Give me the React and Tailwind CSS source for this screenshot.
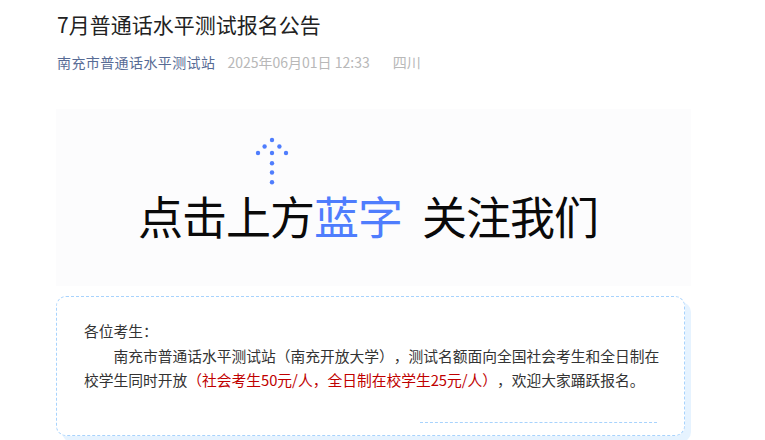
import React from 'react';

const cjk = { fontFamily: '"Noto Sans CJK SC", "Noto Sans", sans-serif' };

// dotted "up" arrow above the banner text
const DotArrow = () => {
  const dots = [
    [18, 3], [10.6, 9.5], [25.4, 9.5], [4, 16], [18, 16], [32, 16],
    [18, 26.3], [18, 35.5], [18, 45.3],
  ];
  return (
    <svg width="36" height="49" viewBox="0 0 36 49" className="block">
      {dots.map(([x, y], i) => (
        <circle key={i} cx={x} cy={y} r="2.2" fill="#4f7dfd" />
      ))}
    </svg>
  );
};

export default function App() {
  return (
    <div className="min-h-screen bg-white" style={cjk}>
      <div className="pl-[56px] pt-[10px] w-[700px]">
        {/* Title */}
        <h1 className="text-[21px] leading-[29px] text-[#222] pl-[1px]">7月普通话水平测试报名公告</h1>

        {/* Meta */}
        <div className="mt-[13px] flex items-center text-[14px] leading-[20px] pl-[1px]">
          <span className="text-[#576b95] tracking-[0.4px]">南充市普通话水平测试站</span>
          <span className="ml-[12px] text-[#b8b8b8]">2025年06月01日 12:33</span>
          <span className="ml-[23px] text-[#b8b8b8]">四川</span>
        </div>

        {/* Banner picture */}
        <div className="mt-[37px] w-[635px] h-[177px] bg-[#fcfcfd] pl-[82px] pt-[28px]">
          <div className="ml-[116px]">
            <DotArrow />
          </div>
          <div className="mt-[4px] flex text-[45px] leading-[52px] text-[#0a0a0a] tracking-[-1px]">
            <span>点击上方</span>
            <span className="text-[#4f7dfd]">蓝字</span>
            <span className="ml-[20px]">关注我们</span>
          </div>
        </div>

        {/* Notice card */}
        <div className="mt-[10px] w-[629px] rounded-[10px] border border-dashed border-[#a8d3fd] bg-white shadow-[6px_6px_0_#e6f3ff] pl-[27px] pr-[10px] pt-[22px] pb-[12px]">
          <div className="text-[14.75px] leading-[24.5px] text-[#333] [text-spacing-trim:space-all]">
            <p>各位考生：</p>
            <p className="indent-[2em]">
              南充市普通话水平测试站（南充开放大学），测试名额面向全国社会考生和全日制在<br />
              校学生同时开放
              <span className="text-[#c00000]">（社会考生50元/人，全日制在校学生25元/人）</span>
              ，欢迎大家踊跃报名。
            </p>
          </div>
          <div className="mt-[29px] mr-[17px] flex justify-end">
            <div className="w-[237px] border-t border-dashed border-[#a8d3fd]"></div>
          </div>
        </div>
      </div>
    </div>
  );
}
